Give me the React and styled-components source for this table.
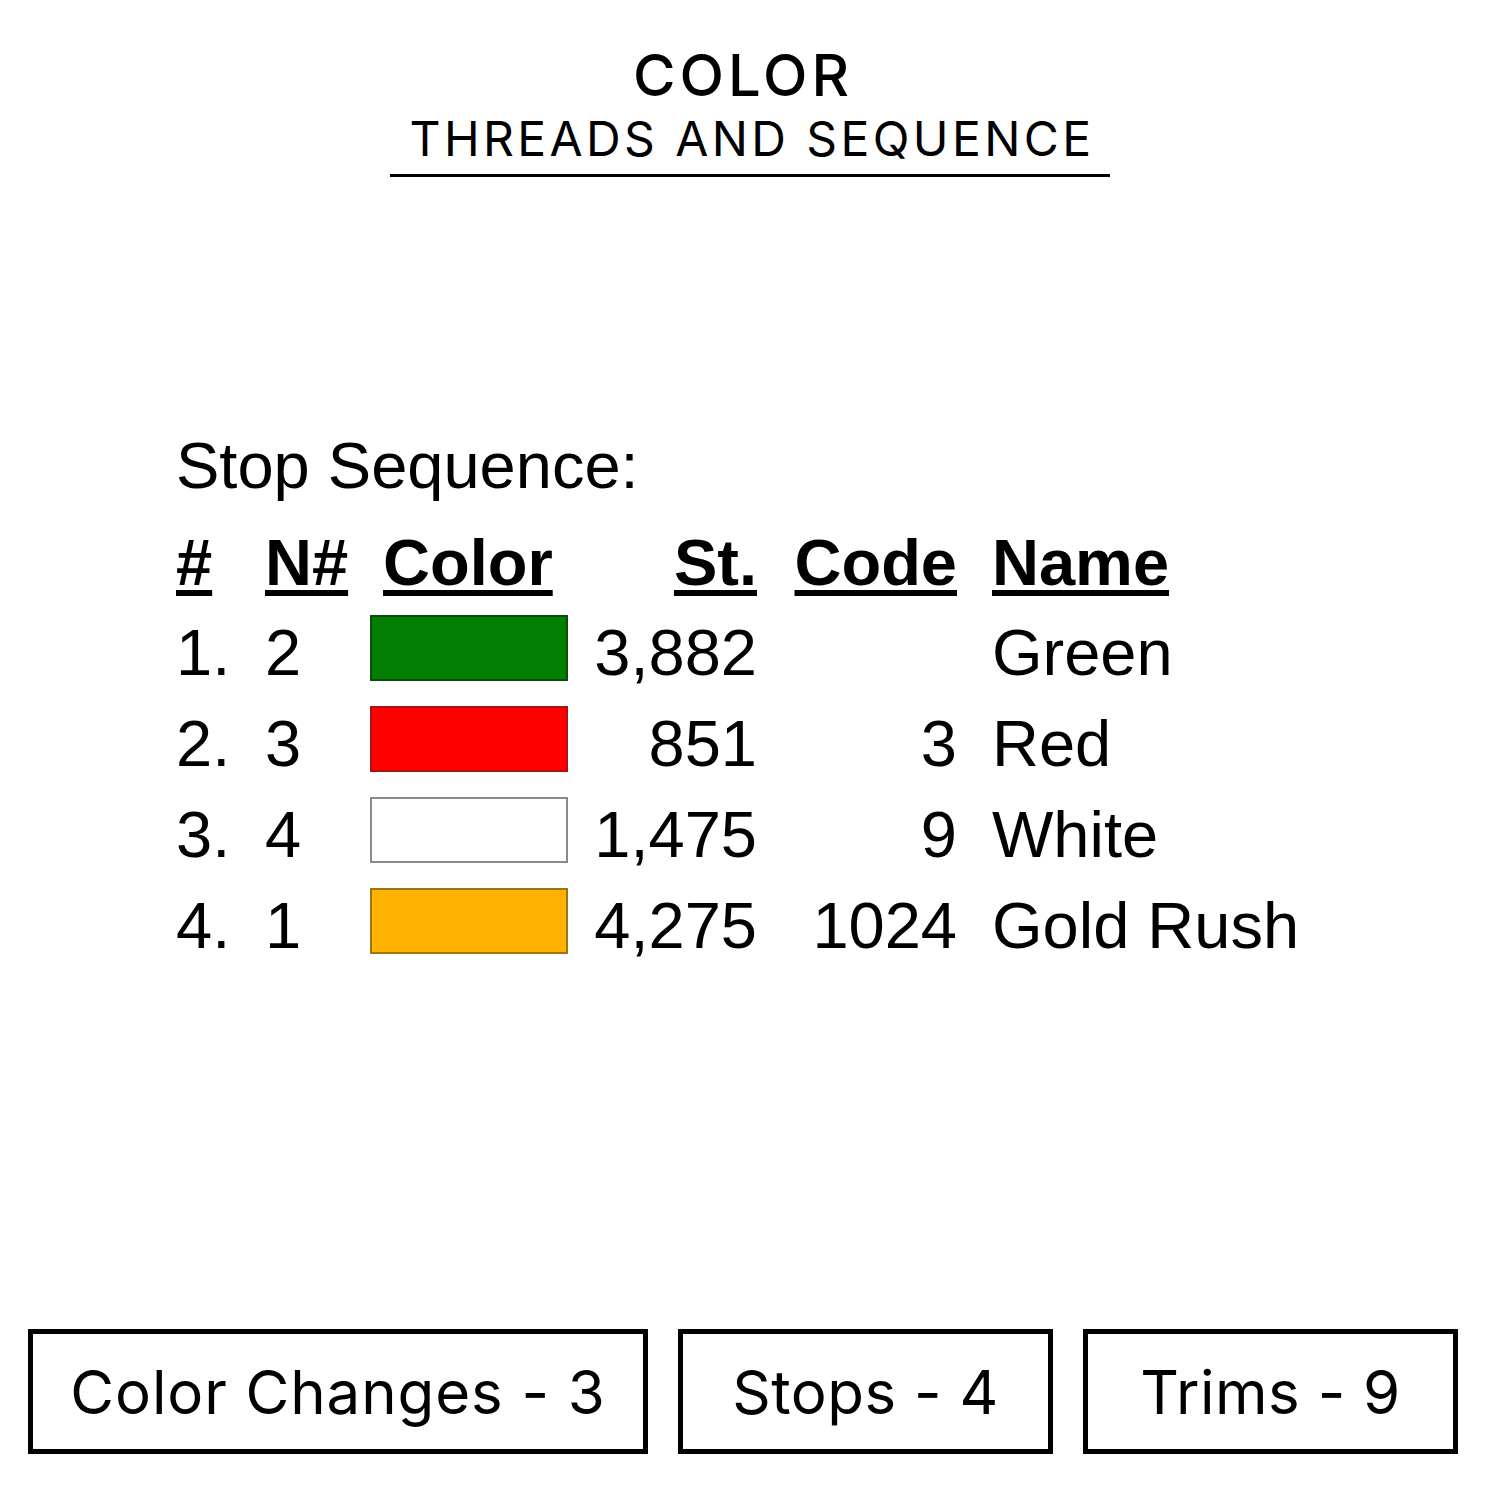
import React from "react";
import styled, { createGlobalStyle } from "styled-components";

const Global = createGlobalStyle`
  html, body { margin: 0; padding: 0; background: #fff; }
  #root { width: 1500px; height: 1500px; }
`;

const Page = styled.div`
  width: 1500px;
  height: 1500px;
  display: flex;
  flex-direction: column;
  background: #fff;
  color: #000;
  box-sizing: border-box;
`;

const Header = styled.header`
  display: flex;
  flex-direction: column;
  align-items: center;
  padding-top: 45px;
  font-family: Inter, "Open Sans", sans-serif;
`;

const Title = styled.h1`
  margin: 0 14px 0 0;
  font-size: 58px;
  line-height: 60px;
  font-weight: 500;
  letter-spacing: 4px;
  color: #000;
`;

const Subtitle = styled.h2`
  margin: 6px 0 0;
  padding: 0 16px 7px 20px;
  font-size: 48px;
  line-height: 56px;
  font-weight: 400;
  letter-spacing: 3.4px;
  border-bottom: 3px solid #000;
  color: #000;
`;

const Sheet = styled.section`
  margin-top: 253px;
  padding-left: 176px;
  font-family: "Liberation Sans", Arial, sans-serif;
  font-size: 65px;
  color: #000;
`;

const SheetTitle = styled.div`
  line-height: 72px;
  margin-bottom: 17px;
`;

const Grid = styled.div`
  display: grid;
  grid-template-columns: 89px 105px 198px 189px 200px auto;
  grid-auto-rows: 91px;
  grid-template-rows: 88px;
  line-height: 88px;
`;

const Head = styled.div`
  font-weight: 700;
  text-align: ${(p) => (p.$right ? "right" : "left")};
  padding-left: ${(p) => p.$pl || 0}px;
  white-space: nowrap;
  & > span {
    text-decoration: underline;
    text-decoration-thickness: 6px;
    text-underline-offset: 5px;
  }
`;

const Cell = styled.div`
  line-height: 91px;
  text-align: ${(p) => (p.$right ? "right" : "left")};
  padding-left: ${(p) => p.$pl || 0}px;
  white-space: nowrap;
`;

const Swatch = styled.div`
  align-self: start;
  margin-top: 8px;
  width: 198px;
  height: 66px;
  box-sizing: border-box;
  background: ${(p) => p.$fill};
  border: 2px solid ${(p) => p.$edge};
`;

const Footer = styled.footer`
  margin-top: auto;
  padding: 0 0 46px 28px;
  display: grid;
  grid-template-columns: 620px 375px 375px;
  column-gap: 30px;
  font-family: Inter, "Open Sans", sans-serif;
`;

const StatBox = styled.div`
  height: 125px;
  box-sizing: border-box;
  border: 5px solid #000;
  display: flex;
  align-items: center;
  justify-content: center;
  font-size: 60px;
  font-weight: 400;
  letter-spacing: ${(p) => p.$ls || 0.5}px;
  color: #000;
`;

const rows = [
  { n: "1.", nn: "2", fill: "#007f00", edge: "#0b4d0b", st: "3,882", code: "", name: "Green" },
  { n: "2.", nn: "3", fill: "#ff0000", edge: "#b01010", st: "851", code: "3", name: "Red" },
  { n: "3.", nn: "4", fill: "#ffffff", edge: "#8a8a8a", st: "1,475", code: "9", name: "White" },
  { n: "4.", nn: "1", fill: "#ffb300", edge: "#9c7410", st: "4,275", code: "1024", name: "Gold Rush" },
];

export default function App() {
  return (
    <Page>
      <Global />
      <Header>
        <Title>COLOR</Title>
        <Subtitle>THREADS AND SEQUENCE</Subtitle>
      </Header>
      <Sheet>
        <SheetTitle>Stop Sequence:</SheetTitle>
        <Grid>
          <Head><span>#</span></Head>
          <Head><span>N#</span></Head>
          <Head $pl={13}><span>Color</span></Head>
          <Head $right><span>St.</span></Head>
          <Head $right><span>Code</span></Head>
          <Head $pl={35}><span>Name</span></Head>
          {rows.map((r) => (
            <React.Fragment key={r.n}>
              <Cell>{r.n}</Cell>
              <Cell>{r.nn}</Cell>
              <Swatch $fill={r.fill} $edge={r.edge} />
              <Cell $right>{r.st}</Cell>
              <Cell $right>{r.code}</Cell>
              <Cell $pl={35}>{r.name}</Cell>
            </React.Fragment>
          ))}
        </Grid>
      </Sheet>
      <Footer>
        <StatBox $ls={0.9}>Color Changes - 3</StatBox>
        <StatBox>Stops - 4</StatBox>
        <StatBox>Trims - 9</StatBox>
      </Footer>
    </Page>
  );
}
